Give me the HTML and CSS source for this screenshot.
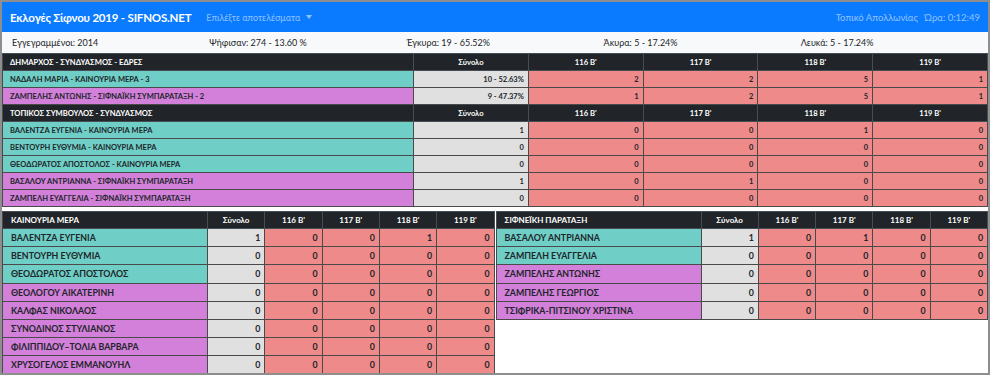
FILE: index.html
```html
<!DOCTYPE html>
<html lang="el">
<head>
    <meta charset="UTF-8">
    <meta name="viewport" content="width=device-width, initial-scale=1.0">
    <title>Εκλογές Σίφνου 2019</title>
    <link rel="stylesheet" href="styles.css">
</head>
<body>
<div class="page">
    <nav class="navbar">
        <span class="brand">Εκλογές Σίφνου 2019 - SIFNOS.NET</span>
        <span class="dropdown">Επιλέξτε αποτελέσματα <span class="caret"></span></span>
        <span class="navRight">Τοπικό Απολλωνίας <span class="clock">Ώρα: 0:12:49</span></span>
    </nav>

    <div class="stats">
        <div>Εγγεγραμμένοι: 2014</div>
        <div>Ψήφισαν: 274 - 13.60 %</div>
        <div>Έγκυρα: 19 - 65.52%</div>
        <div>Άκυρα: 5 - 17.24%</div>
        <div>Λευκά: 5 - 17.24%</div>
    </div>

    <table class="results main">
        <colgroup><col class="nameCol"><col><col><col><col><col></colgroup>
        <tr class="head"><th>ΔΗΜΑΡΧΟΣ - ΣΥΝΔΥΑΣΜΟΣ - ΕΔΡΕΣ</th><th>Σύνολο</th><th>116 Β'</th><th>117 Β'</th><th>118 Β'</th><th>119 Β'</th></tr>
        <tr><td class="teal">ΝΑΔΑΛΗ ΜΑΡΙΑ - ΚΑΙΝΟΥΡΙΑ ΜΕΡΑ - 3</td><td class="sum">10 - 52.63%</td><td>2</td><td>2</td><td>5</td><td>1</td></tr>
        <tr><td class="purple">ΖΑΜΠΕΛΗΣ ΑΝΤΩΝΗΣ - ΣΙΦΝΑΪΚΗ ΣΥΜΠΑΡΑΤΑΞΗ - 2</td><td class="sum">9 - 47.37%</td><td>1</td><td>2</td><td>5</td><td>1</td></tr>
        <tr class="head"><th>ΤΟΠΙΚΟΣ ΣΥΜΒΟΥΛΟΣ - ΣΥΝΔΥΑΣΜΟΣ</th><th>Σύνολο</th><th>116 Β'</th><th>117 Β'</th><th>118 Β'</th><th>119 Β'</th></tr>
        <tr><td class="teal">ΒΑΛΕΝΤΖΑ ΕΥΓΕΝΙΑ - ΚΑΙΝΟΥΡΙΑ ΜΕΡΑ</td><td class="sum">1</td><td>0</td><td>0</td><td>1</td><td>0</td></tr>
        <tr><td class="teal">ΒΕΝΤΟΥΡΗ ΕΥΘΥΜΙΑ - ΚΑΙΝΟΥΡΙΑ ΜΕΡΑ</td><td class="sum">0</td><td>0</td><td>0</td><td>0</td><td>0</td></tr>
        <tr><td class="teal">ΘΕΟΔΩΡΑΤΟΣ ΑΠΟΣΤΟΛΟΣ - ΚΑΙΝΟΥΡΙΑ ΜΕΡΑ</td><td class="sum">0</td><td>0</td><td>0</td><td>0</td><td>0</td></tr>
        <tr><td class="purple">ΒΑΣΑΛΟΥ ΑΝΤΡΙΑΝΝΑ - ΣΙΦΝΑΪΚΗ ΣΥΜΠΑΡΑΤΑΞΗ</td><td class="sum">1</td><td>0</td><td>1</td><td>0</td><td>0</td></tr>
        <tr><td class="purple">ΖΑΜΠΕΛΗ ΕΥΑΓΓΕΛΙΑ - ΣΙΦΝΑΪΚΗ ΣΥΜΠΑΡΑΤΑΞΗ</td><td class="sum">0</td><td>0</td><td>0</td><td>0</td><td>0</td></tr>
    </table>

    <div class="parties">
        <table class="results party">
            <colgroup><col class="nameCol"><col><col><col><col><col></colgroup>
            <tr class="head"><th>ΚΑΙΝΟΥΡΙΑ ΜΕΡΑ</th><th>Σύνολο</th><th>116 Β'</th><th>117 Β'</th><th>118 Β'</th><th>119 Β'</th></tr>
            <tr><td class="teal">ΒΑΛΕΝΤΖΑ ΕΥΓΕΝΙΑ</td><td class="sum">1</td><td>0</td><td>0</td><td>1</td><td>0</td></tr>
            <tr><td class="teal">ΒΕΝΤΟΥΡΗ ΕΥΘΥΜΙΑ</td><td class="sum">0</td><td>0</td><td>0</td><td>0</td><td>0</td></tr>
            <tr><td class="teal">ΘΕΟΔΩΡΑΤΟΣ ΑΠΟΣΤΟΛΟΣ</td><td class="sum">0</td><td>0</td><td>0</td><td>0</td><td>0</td></tr>
            <tr><td class="purple">ΘΕΟΛΟΓΟΥ ΑΙΚΑΤΕΡΙΝΗ</td><td class="sum">0</td><td>0</td><td>0</td><td>0</td><td>0</td></tr>
            <tr><td class="purple">ΚΑΛΦΑΣ ΝΙΚΟΛΑΟΣ</td><td class="sum">0</td><td>0</td><td>0</td><td>0</td><td>0</td></tr>
            <tr><td class="purple">ΣΥΝΟΔΙΝΟΣ ΣΤΥΛΙΑΝΟΣ</td><td class="sum">0</td><td>0</td><td>0</td><td>0</td><td>0</td></tr>
            <tr><td class="purple">ΦΙΛΙΠΠΙΔΟΥ–ΤΟΛΙΑ ΒΑΡΒΑΡΑ</td><td class="sum">0</td><td>0</td><td>0</td><td>0</td><td>0</td></tr>
            <tr><td class="purple">ΧΡΥΣΟΓΕΛΟΣ ΕΜΜΑΝΟΥΗΛ</td><td class="sum">0</td><td>0</td><td>0</td><td>0</td><td>0</td></tr>
        </table>
        <table class="results party">
            <colgroup><col class="nameCol"><col><col><col><col><col></colgroup>
            <tr class="head"><th>ΣΙΦΝΕΪΚΗ ΠΑΡΑΤΑΞΗ</th><th>Σύνολο</th><th>116 Β'</th><th>117 Β'</th><th>118 Β'</th><th>119 Β'</th></tr>
            <tr><td class="teal">ΒΑΣΑΛΟΥ ΑΝΤΡΙΑΝΝΑ</td><td class="sum">1</td><td>0</td><td>1</td><td>0</td><td>0</td></tr>
            <tr><td class="teal">ΖΑΜΠΕΛΗ ΕΥΑΓΓΕΛΙΑ</td><td class="sum">0</td><td>0</td><td>0</td><td>0</td><td>0</td></tr>
            <tr><td class="purple">ΖΑΜΠΕΛΗΣ ΑΝΤΩΝΗΣ</td><td class="sum">0</td><td>0</td><td>0</td><td>0</td><td>0</td></tr>
            <tr><td class="purple">ΖΑΜΠΕΛΗΣ ΓΕΩΡΓΙΟΣ</td><td class="sum">0</td><td>0</td><td>0</td><td>0</td><td>0</td></tr>
            <tr><td class="purple">ΤΣΙΦΡΙΚΑ-ΠΙΤΣΙΝΟΥ ΧΡΙΣΤΙΝΑ</td><td class="sum">0</td><td>0</td><td>0</td><td>0</td><td>0</td></tr>
        </table>
    </div>
</div>
</body>
</html>
```

FILE: styles.css
```css
*{margin: 0; padding: 0; box-sizing: border-box;}
body{font-family: Lato, "Open Sans", sans-serif; color: #212529; background: #fff;}
.page{width: 990px; height: 375px; border: 2px solid #8e8e8e; overflow: hidden; background: #fff;}

/* top bar */
.navbar{height: 30px; background: #0a7bff; display: flex; align-items: center; padding: 0 8px; color: #fff;}
.brand{font-size: 11.5px; font-weight: 700; letter-spacing: -0.2px;}
.dropdown{margin-left: 15px; font-size: 9px; color: rgba(255,255,255,.55);}
.caret{display: inline-block; margin-left: 3px; vertical-align: 2px; border-top: 4px solid rgba(255,255,255,.55); border-left: 3.5px solid transparent; border-right: 3.5px solid transparent;}
.navRight{margin-left: auto; font-size: 9.5px; color: rgba(255,255,255,.55);}
.clock{margin-left: 4px;}

.stats{height: 21px; background: #f8f9fa; display: grid; grid-template-columns: repeat(5, 1fr); align-items: center; font-size: 9px;}
.stats>div{padding-left: 10px;}

/* tables */
.results{border-collapse: collapse; table-layout: fixed; width: 100%; font-weight: 700;}
.results th, .results td{border: 1px solid #4a4a4a; white-space: nowrap; overflow: hidden;}
.results .head th{background: #212529; color: #fff; border-color: #454d55; text-align: center; font-size: 7.6px;}
.results .head th:first-child{text-align: left;}
.results td{background: #ee8a8a; text-align: right; padding: 0 4px;}
.results td.sum{background: #e0e0e0;}
.results td.teal{background: #6fcfc7; text-align: left;}
.results td.purple{background: #d280d9; text-align: left;}

.main{font-size: 7.5px;}
.main .nameCol{width: 411px;}
.main tr{height: 17px;}
.main th:first-child, .main td:first-child{padding-left: 7px;}

.parties{display: grid; grid-template-columns: 1fr 1fr; gap: 1px; margin-top: 4px; align-items: start;}
.party{font-size: 8.8px;}
.party .nameCol{width: 205px;}
.party .head th{font-size: 8px;}
.party tr.head{height: 17px;}
.party tr{height: 18.2px;}
.party th:first-child, .party td:first-child{padding-left: 8px;}
```
